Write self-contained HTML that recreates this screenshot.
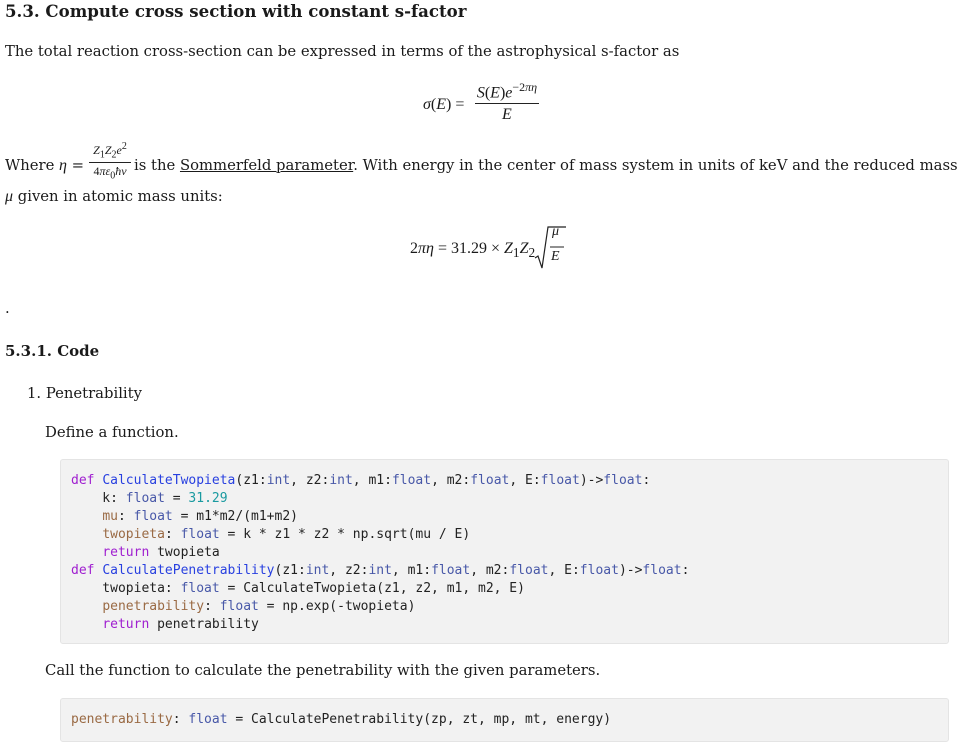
<!DOCTYPE html>
<html><head><meta charset="utf-8"><style>
body{margin:0;background:#fff;width:963px;height:749px;overflow:hidden;color:#1a1a1a;font-family:"DejaVu Serif","Liberation Serif",serif;font-size:14.8px;position:relative}
.a{position:absolute;white-space:nowrap}
.m{font-family:"Liberation Serif",serif;font-size:16px}
i{font-style:italic}
pre{margin:0;font-family:"DejaVu Sans Mono",monospace;font-size:13px;line-height:18px;color:#222}
.code{position:absolute;left:60px;background:#f2f2f2;border:1px solid #e4e4e4;border-radius:3px;width:887px}
.k{color:#a020d0}.f{color:#2840e0}.t{color:#4858a8}.v{color:#9a6a44}.n{color:#1a9aa0}
</style></head><body>
<div class="a" style="left:5px;top:1px;font-weight:bold;font-size:16.6px">5.3. Compute cross section with constant s-factor</div>
<div class="a" style="left:5px;top:43px">The total reaction cross-section can be expressed in terms of the astrophysical s-factor as</div>
<div class="a m" style="left:423px;top:96px"><i>σ</i>(<i>E</i>) =</div>
<div class="a m" style="left:474px;top:80px;width:66px;text-align:center"><i>S</i>(<i>E</i>)<i>e</i><sup style="font-size:12px">−2<i>πη</i></sup></div>
<div class="a" style="left:475px;top:103px;width:64px;border-top:1px solid #222"></div>
<div class="a m" style="left:502px;top:106px"><i>E</i></div>
<div class="a" style="left:5px;top:157px">Where <i class="m">η</i> =</div>
<div class="a m" style="left:88px;top:141px;font-size:12px;width:44px;text-align:center"><i>Z</i><sub>1</sub><i>Z</i><sub>2</sub><i>e</i><sup>2</sup></div>
<div class="a" style="left:89px;top:162px;width:42px;border-top:1px solid #222"></div>
<div class="a m" style="left:88px;top:164px;font-size:12px;width:44px;text-align:center">4<i>πε</i><sub>0</sub><i>ħν</i></div>
<div class="a" style="left:134px;top:157px">is the <u>Sommerfeld parameter</u>. With energy in the center of mass system in units of keV and the reduced mass</div>
<div class="a" style="left:5px;top:188px"><i class="m">μ</i> given in atomic mass units:</div>
<div class="a m" style="left:410px;top:240px">2<i>πη</i> = 31.29 × <i>Z</i><sub>1</sub><i>Z</i><sub>2</sub></div>
<svg class="a" style="left:534px;top:225px" width="32" height="45"><path d="M1 33 L4 31 L8 43 L14 2 L32 2" fill="none" stroke="#222" stroke-width="1.2"/><line x1="16" y1="22" x2="30" y2="22" stroke="#222"/></svg>
<div class="a m" style="left:552px;top:224px;font-size:14px"><i>μ</i></div>
<div class="a m" style="left:551px;top:249px;font-size:14px"><i>E</i></div>
<div class="a" style="left:5px;top:300px">.</div>
<div class="a" style="left:5px;top:342px;font-weight:bold;font-size:15px">5.3.1. Code</div>
<div class="a" style="left:27px;top:385px">1. Penetrability</div>
<div class="a" style="left:45px;top:424px">Define a function.</div>
<div class="code" style="top:459px;height:183px"><pre style="padding:12px 10px">
<span class="k">def</span> <span class="f">CalculateTwopieta</span>(z1:<span class="t">int</span>, z2:<span class="t">int</span>, m1:<span class="t">float</span>, m2:<span class="t">float</span>, E:<span class="t">float</span>)-&gt;<span class="t">float</span>:
    k: <span class="t">float</span> = <span class="n">31.29</span>
    <span class="v">mu</span>: <span class="t">float</span> = m1*m2/(m1+m2)
    <span class="v">twopieta</span>: <span class="t">float</span> = k * z1 * z2 * np.sqrt(mu / E)
    <span class="k">return</span> twopieta
<span class="k">def</span> <span class="f">CalculatePenetrability</span>(z1:<span class="t">int</span>, z2:<span class="t">int</span>, m1:<span class="t">float</span>, m2:<span class="t">float</span>, E:<span class="t">float</span>)-&gt;<span class="t">float</span>:
    twopieta: <span class="t">float</span> = CalculateTwopieta(z1, z2, m1, m2, E)
    <span class="v">penetrability</span>: <span class="t">float</span> = np.exp(-twopieta)
    <span class="k">return</span> penetrability</pre></div>
<div class="a" style="left:45px;top:662px">Call the function to calculate the penetrability with the given parameters.</div>
<div class="code" style="top:698px;height:42px"><pre style="padding:12px 10px"><span class="v">penetrability</span>: <span class="t">float</span> = CalculatePenetrability(zp, zt, mp, mt, energy)</pre></div>
</body></html>
